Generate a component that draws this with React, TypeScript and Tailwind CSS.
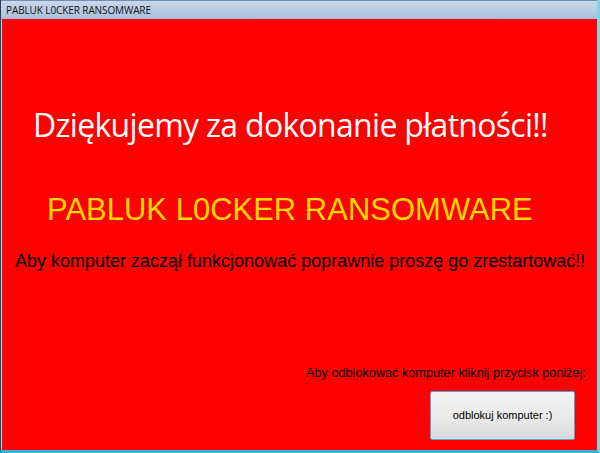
import React from 'react';

const App = () => {
    return (
        <div className="w-[600px] h-[453px] bg-[#1a1a1a] overflow-hidden relative">
            {/* Window frame */}
            <div className="h-full flex flex-col border-l border-l-[#2c3e52] border-r-[3px] border-r-[#7fd4ea] border-b-[3px] border-b-[#33b6d6]">
                {/* Title bar */}
                <div className="h-[19px] shrink-0 flex items-center pl-[5px] bg-gradient-to-b from-[#c9d9ec] to-[#a8bfdc] border-t border-t-[#6f8fb3]">
                    <span className="text-[10px] text-[#111] font-['Open_Sans',sans-serif] leading-none tracking-[-0.1px]">PABLUK L0CKER RANSOMWARE</span>
                </div>
                {/* Client area */}
                <div className="flex-1 bg-[#ff0000] border-l border-l-[#b9d3ea] flex flex-col">
                    <div className="mt-[90px] ml-[31px] text-white text-[32px] leading-none font-['Open_Sans',sans-serif] tracking-[-0.7px]">
                        Dziękujemy za dokonanie płatności!!
                    </div>
                    <div className="mt-[53px] ml-[45px] text-[#ffd800] text-[31px] leading-none font-['Liberation_Sans',Arial,sans-serif]">
                        PABLUK L0CKER RANSOMWARE
                    </div>
                    <div className="mt-[27px] ml-[13px] text-black text-[18px] leading-none font-['Liberation_Sans',Arial,sans-serif]">
                        Aby komputer zaczął funkcjonować poprawnie proszę go zrestartować!!
                    </div>
                    <div className="mt-auto flex flex-col items-end pr-[8px] pb-[10px]">
                        <div className="text-black text-[12.7px] leading-none font-['Liberation_Sans',Arial,sans-serif] mr-[3px]">
                            Aby odblokować komputer kliknij przycisk poniżej:
                        </div>
                        <button className="mt-[11px] w-[145px] h-[49px] border border-[#3cb0d9] rounded-[2px] bg-gradient-to-b from-[#f2f2f2] via-[#ebebeb] to-[#d9d9d9] text-[11px] text-black font-['Liberation_Sans',Arial,sans-serif] mr-[14px]">
                            odblokuj komputer :)
                        </button>
                    </div>
                </div>
            </div>
        </div>
    );
};

export default App;
